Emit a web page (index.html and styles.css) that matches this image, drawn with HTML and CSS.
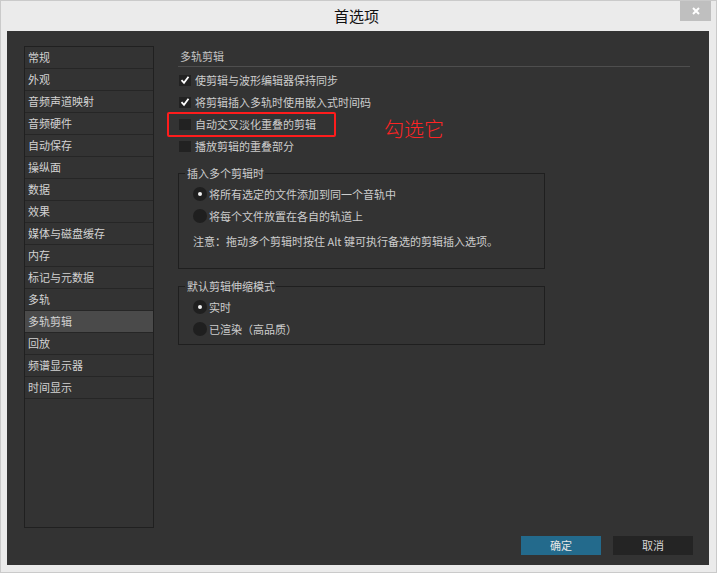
FILE: index.html
```html
<!DOCTYPE html>
<html lang="zh-CN">
<head>
<meta charset="utf-8">
<title>首选项</title>
<link rel="stylesheet" href="styles.css">
</head>
<body>
<div class="window">
  <div class="titlebar">
    <span class="spacer"></span>
    <span class="title">首选项</span>
    <button class="close" aria-label="关闭">
      <svg width="8" height="8" viewBox="0 0 8 8"><path d="M1 1L7 7M7 1L1 7" stroke="#fff" stroke-width="2" fill="none"/></svg>
    </button>
  </div>
  <div class="body">
    <div class="top">
      <ul class="nav">
        <li>常规</li>
        <li>外观</li>
        <li>音频声道映射</li>
        <li>音频硬件</li>
        <li>自动保存</li>
        <li>操纵面</li>
        <li>数据</li>
        <li>效果</li>
        <li>媒体与磁盘缓存</li>
        <li>内存</li>
        <li>标记与元数据</li>
        <li>多轨</li>
        <li class="active">多轨剪辑</li>
        <li>回放</li>
        <li>频谱显示器</li>
        <li>时间显示</li>
      </ul>
      <div class="main">
        <div class="section-title">多轨剪辑</div>
        <div class="checks">
          <div class="row"><span class="box checked"><svg width="12" height="12" viewBox="0 0 12 12"><path d="M2.5 6.2L5 8.8L9.5 2.8" stroke="#fff" stroke-width="1.8" fill="none"/></svg></span>使剪辑与波形编辑器保持同步</div>
          <div class="row"><span class="box checked"><svg width="12" height="12" viewBox="0 0 12 12"><path d="M2.5 6.2L5 8.8L9.5 2.8" stroke="#fff" stroke-width="1.8" fill="none"/></svg></span>将剪辑插入多轨时使用嵌入式时间码</div>
          <div class="row"><span class="box"></span>自动交叉淡化重叠的剪辑</div>
          <div class="row"><span class="box"></span>播放剪辑的重叠部分</div>
        </div>
        <fieldset class="group group-insert">
          <legend>插入多个剪辑时</legend>
          <div class="group-body">
            <div class="row"><span class="radio on"></span>将所有选定的文件添加到同一个音轨中</div>
            <div class="row"><span class="radio"></span>将每个文件放置在各自的轨道上</div>
            <p class="note">注意：拖动多个剪辑时按住 Alt 键可执行备选的剪辑插入选项。</p>
          </div>
        </fieldset>
        <fieldset class="group group-stretch">
          <legend>默认剪辑伸缩模式</legend>
          <div class="group-body">
            <div class="row"><span class="radio on"></span>实时</div>
            <div class="row"><span class="radio"></span>已渲染（高品质）</div>
          </div>
        </fieldset>
        <div class="mark-box"></div>
        <div class="mark-text">勾选它</div>
      </div>
    </div>
    <div class="buttons">
      <button class="btn primary">确定</button>
      <button class="btn">取消</button>
    </div>
  </div>
</div>
</body>
</html>
```
FILE: styles.css
```css
* { box-sizing: border-box; }
html, body { margin: 0; padding: 0; background: #ebebeb; }
body { font-family: "Noto Sans CJK SC", "Noto Sans", sans-serif; }

.window {
  width: 717px;
  height: 573px;
  border: 1px solid #cacaca;
  background: #ebebeb;
  display: flex;
  flex-direction: column;
}

.titlebar {
  height: 30px;
  display: grid;
  grid-template-columns: 1fr auto 1fr;
  align-items: start;
  padding-right: 5px;
}
.title {
  font-size: 15px;
  line-height: 30px;
  color: #111;
  padding-left: 1px;
}
.close {
  justify-self: end;
  width: 31px;
  height: 20px;
  border: 0;
  padding: 0;
  background: #bfbfbf;
  display: flex;
  align-items: center;
  justify-content: center;
}

.body {
  flex: 1;
  margin: 0 7px 7px 6px;
  background: #333333;
  display: flex;
  flex-direction: column;
  padding: 15px 16px 10px 17px;
  color: #cdcdcd;
  font-size: 11px;
}

.top {
  display: flex;
  align-items: flex-start;
}

.nav {
  list-style: none;
  margin: 0;
  padding: 0;
  width: 130px;
  height: 482px;
  border: 1px solid #202020;
}
.nav li {
  height: 22px;
  line-height: 21px;
  padding-left: 3px;
  border-bottom: 1px solid #262626;
  color: #d2d2d2;
  font-size: 11px;
}
.nav li.active { background: #4a4a4a; }

.main {
  position: relative;
  flex: 1;
  margin-left: 24px;
  margin-right: 3px;
  padding-top: 2px;
}

.section-title {
  height: 19px;
  line-height: 17px;
  padding-left: 2px;
  border-bottom: 1px solid #4e4e4e;
  color: #c4c4c4;
}

.checks { margin-top: 2px; padding-left: 1px; }

.row {
  height: 22px;
  display: flex;
  align-items: center;
  white-space: nowrap;
}

.box {
  width: 12px;
  height: 11px;
  background: #222222;
  margin-right: 4px;
  display: flex;
  align-items: center;
  justify-content: center;
  flex: none;
}

.group {
  margin: 9px 0 0 0;
  padding: 0;
  width: 367px;
  border: 1px solid #1f1f1f;
  min-width: 0;
}
.group legend {
  margin-left: 6px;
  padding: 0 1px 0 2px;
  font-size: 11px;
  line-height: 14px;
  color: #cdcdcd;
}
.group-body { padding: 3px 0 0 14px; }
.group-insert .group-body { padding-bottom: 19px; }
.group-stretch { margin-top: 10px; }
.group-stretch .group-body { padding-bottom: 4px; }

.radio {
  width: 14px;
  height: 14px;
  border-radius: 50%;
  background: #1f1f1f;
  margin-right: 2px;
  display: flex;
  align-items: center;
  justify-content: center;
  flex: none;
}
.radio.on::after {
  content: "";
  width: 4px;
  height: 4px;
  border-radius: 50%;
  background: #f2f2f2;
}

.note {
  margin: 6px 0 0 0;
  line-height: 16px;
  white-space: nowrap;
}

.mark-box {
  position: absolute;
  left: -11px;
  top: 66px;
  width: 169px;
  height: 25px;
  border: 2px solid #ff1c1c;
  border-radius: 2px;
}
.mark-text {
  position: absolute;
  left: 206px;
  top: 72px;
  font-size: 20px;
  line-height: 22px;
  color: #ff2424;
  font-weight: 300;
}

.buttons {
  margin-top: auto;
  display: flex;
  justify-content: flex-end;
  gap: 12px;
}
.btn {
  width: 80px;
  height: 19px;
  border: 0;
  padding: 0;
  background: #242424;
  color: #d6d6d6;
  font-family: inherit;
  font-size: 11px;
  line-height: 19px;
}
.btn.primary { background: #236a8c; color: #e6e6e6; }
```
